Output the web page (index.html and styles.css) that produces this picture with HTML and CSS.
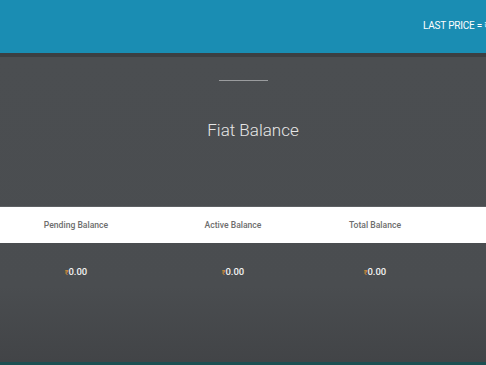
FILE: index.html
```html
<!DOCTYPE html>
<html lang="en">
<head>
    <meta charset="UTF-8">
    <meta name="viewport" content="width=device-width, initial-scale=1.0">
    <title>Fiat Balance</title>
    <link rel="stylesheet" href="styles.css">
</head>
<body>

<header class="topbar">
    <div class="ticker">LAST PRICE = ₹2,41,500.00</div>
</header>

<div class="page">
    <div class="title-block">
        <hr class="rule">
        <h1>Fiat Balance</h1>
    </div>

    <div class="balance-head">
        <div>Pending Balance</div>
        <div>Active Balance</div>
        <div>Total Balance</div>
        <div></div>
    </div>

    <div class="balance-row">
        <div><span class="cur">₹</span>0.00</div>
        <div><span class="cur">₹</span>0.00</div>
        <div><span class="cur">₹</span>0.00</div>
        <div></div>
    </div>
</div>

<div class="footer-line"></div>

</body>
</html>
```

FILE: styles.css
```css
body {
    margin: 0;
    font-family: Roboto, "Liberation Sans", sans-serif;
    background: #4b4e51;
    height: 365px;
    overflow: hidden;
    display: flex;
    flex-direction: column;
}
.topbar {
    background-color: #1a8db3;
    height: 53px;
    border-bottom: 4px solid #3c3f42;
    display: flex;
    align-items: center;
    overflow: hidden;
    white-space: nowrap;
}
.ticker {
    color: #fff;
    font-size: 10px;
    letter-spacing: -0.2px;
    padding-left: 423px;
    margin-top: -3px;
}
.page {
    flex: 1;
    background: linear-gradient(to bottom, #4b4e51 0%, #4a4d50 75%, #424447 100%);
}
.title-block {
    text-align: center;
    padding-top: 23px;
}
.rule {
    width: 49px;
    margin: 0 auto;
    border: 0;
    border-top: 1px solid #9a9c9e;
}
h1 {
    margin: 39px 0 0;
    padding-left: 20px; /* title sits a bit right of the rule */
    font-size: 17px;
    font-weight: 300;
    color: #e6e6e6;
    line-height: 20px;
}
.balance-head {
    margin-top: 66px;
    background: #fff;
    height: 36px;
    display: grid;
    grid-template-columns: 152px 162px 122px 1fr;
    align-items: center;
    text-align: center;
    font-size: 8.6px;
    font-weight: 500;
    color: #6d6d6d;
    border-top: 1px solid #5e6164;
}
.balance-row {
    display: grid;
    grid-template-columns: 152px 162px 122px 1fr;
    text-align: center;
    padding-top: 23px;
    font-size: 9.5px;
    font-weight: 500;
    color: #f2f2f2;
}
.cur {
    color: #c98a3a;
    font-size: 7px;
}
.footer-line {
    height: 3px;
    background: #1d4f52;
}
```
